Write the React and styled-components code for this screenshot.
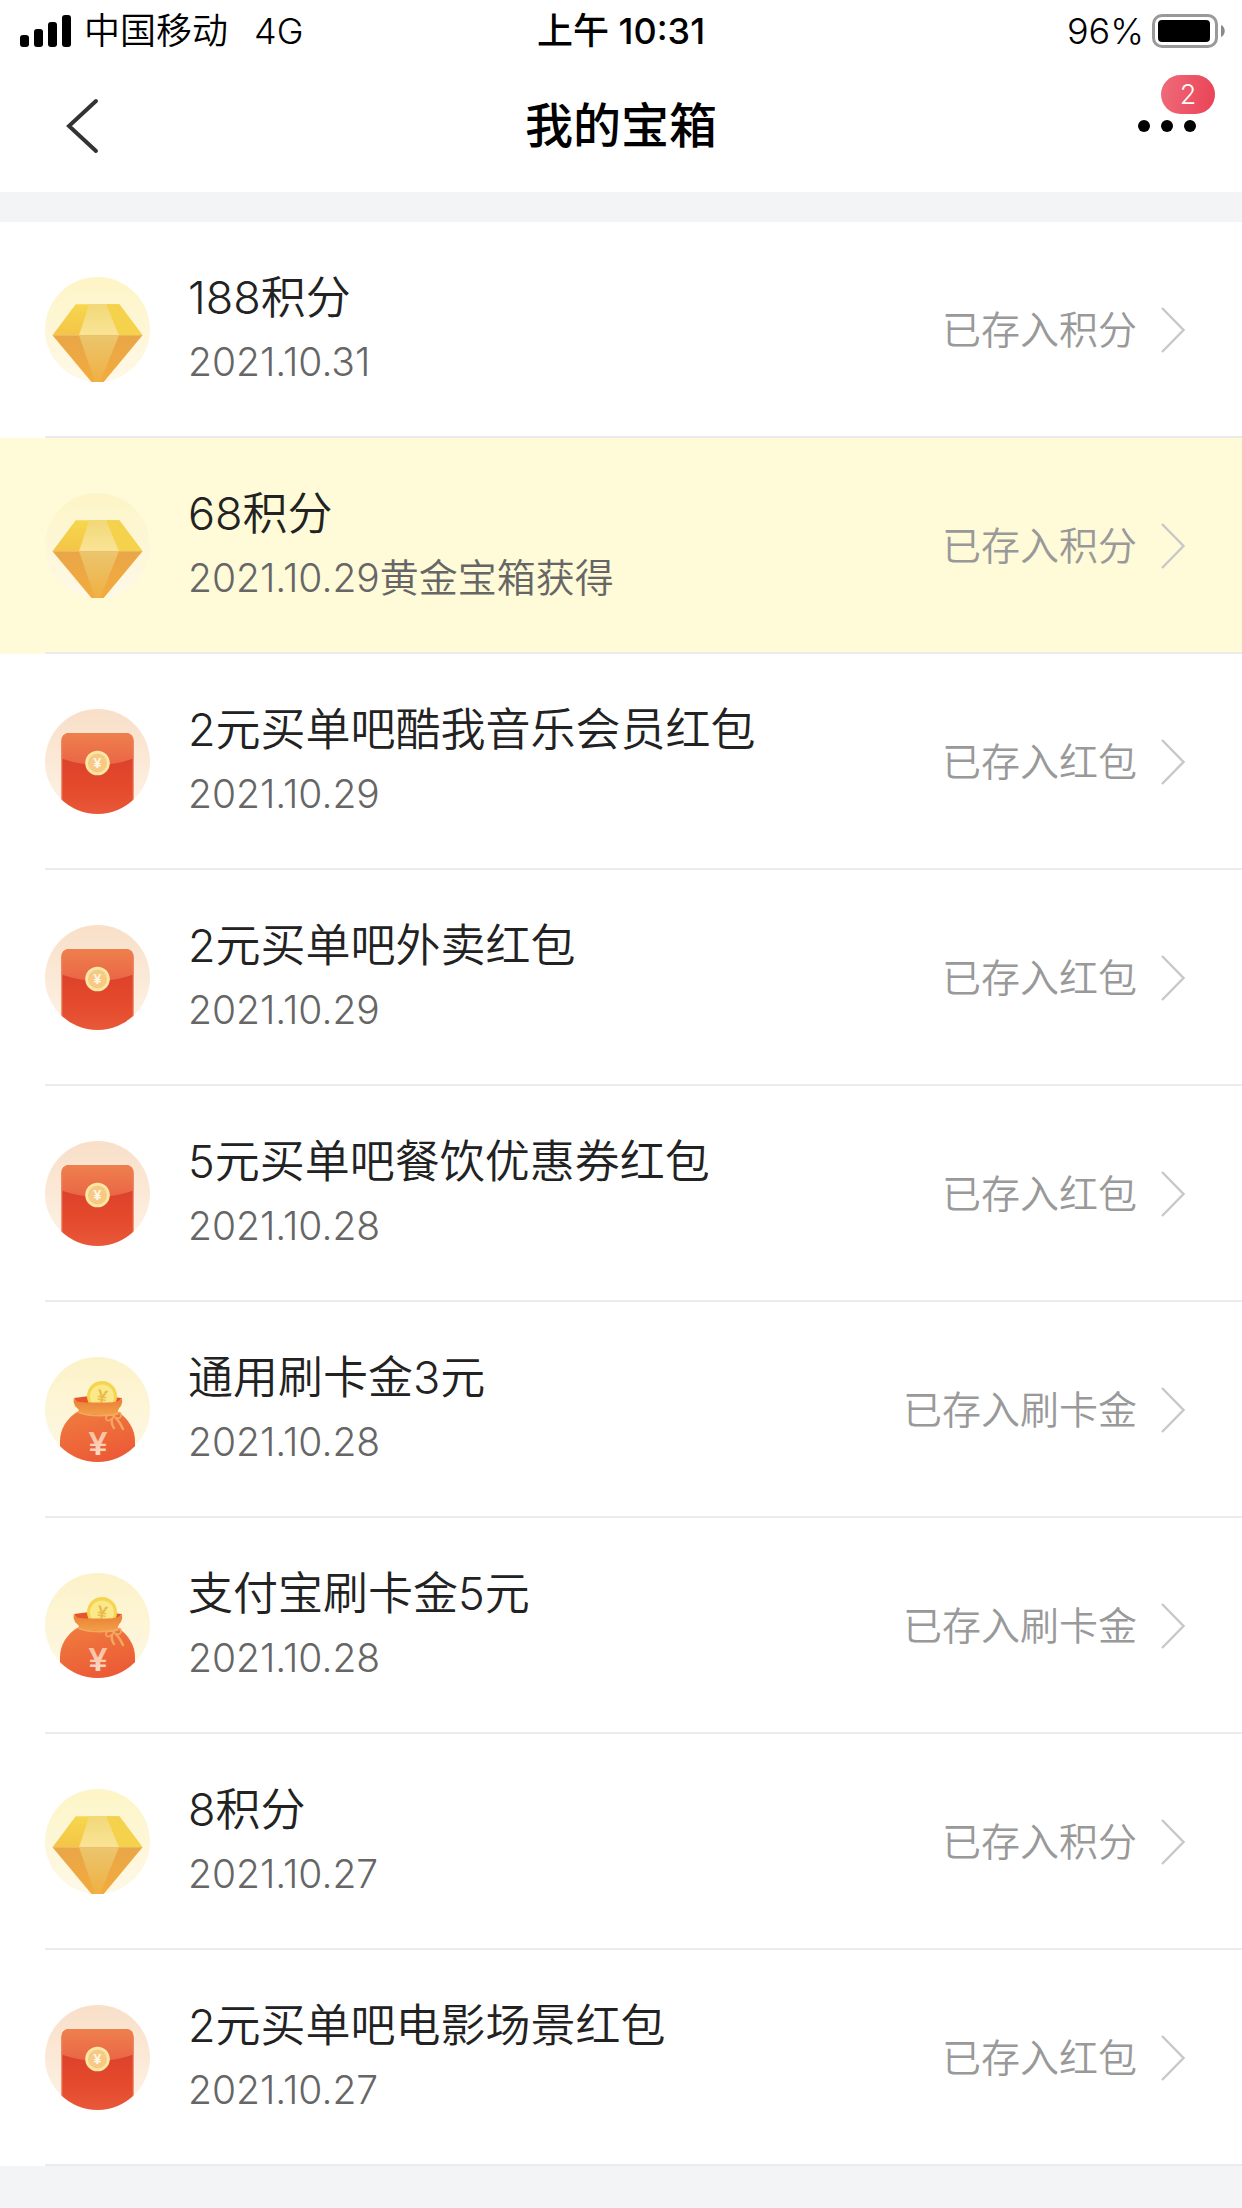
import React from 'react';

import styled, { createGlobalStyle } from 'styled-components'


const GlobalStyle = createGlobalStyle`
    * {
        box-sizing: border-box;
    }
    body {
        margin: 0;
        background-color: #f3f4f6;
        font-family: Inter, "Noto Sans CJK SC", sans-serif;
    }
`;

const PageView = styled.div`
    width: 100%;
    min-height: 100vh;
    background-color: #f3f4f6;
`;

const StatusBar = styled.div`
    width: 100%;
    height: 60px;
    padding: 2px 16px 0;
    display: grid;
    grid-template-columns: 1fr auto 1fr;
    align-items: center;
    background-color: white;
    color: black;
    font-size: 36px;
    font-weight: 350;
    line-height: 58px;
    svg {
        display: block;
    }
    .carrier {
        padding-left: 4px;
        display: flex;
        align-items: center;
        gap: 12px;
    }
    .network {
        padding-left: 14px;
    }
    .time {
        font-weight: 500;
    }
    .battery {
        display: flex;
        align-items: center;
        justify-content: flex-end;
        gap: 8px;
    }
`;

const HeaderView = styled.header`
    width: 100%;
    height: 132px;
    padding: 0 46px;
    display: grid;
    grid-template-columns: 1fr auto 1fr;
    align-items: center;
    background-color: white;
    h1 {
        margin: 0;
        color: black;
        font-size: 48px;
        font-weight: 500;
        line-height: 72px;
    }
`;

const IconButton = styled.button`
    position: relative;
    justify-self: ${props => props.$side};
    padding: 0;
    border: 0;
    background-color: transparent;
    cursor: pointer;
    svg {
        display: block;
    }
`;

const Badge = styled.span`
    position: absolute;
    right: -19px;
    bottom: 18px;
    width: 54px;
    height: 39px;
    border-radius: 20px;
    background: linear-gradient(100deg, #ef6c7b, #ea4255);
    color: white;
    font-family: Inter, sans-serif;
    font-size: 27px;
    font-weight: 350;
    line-height: 39px;
    text-align: center;
`;

const RewardList = styled.ul`
    margin: 30px 0 0;
    padding: 0;
    list-style: none;
`;

const RewardItem = styled.li`
    padding-left: 45px;
    background-color: ${props => props.$active ? '#fffad7' : 'white'};
`;

const RewardLink = styled.a`
    height: 216px;
    padding-top: 1px;
    padding-right: 57px;
    border-bottom: 2px solid #ebebee;
    display: flex;
    flex-direction: row;
    align-items: center;
    color: #222222;
    font-weight: 350;
    line-height: 64px;
    text-decoration: none;
    > svg {
        flex-shrink: 0;
        display: block;
    }
    .detail {
        flex: 1;
        padding-left: 38px;
    }
    .name {
        font-size: 45px;
    }
    .date {
        color: #666666;
        font-size: 39px;
    }
    .status {
        padding-right: 24px;
        color: #999999;
        font-size: 39px;
    }
`;


const SignalIcon = () => (
    <svg width="52" height="32" viewBox="0 0 52 32" aria-hidden="true">
        <rect x="0" y="20" width="9" height="12" rx="3" />
        <rect x="14" y="14" width="9" height="18" rx="3" />
        <rect x="28" y="7" width="9" height="25" rx="3" />
        <rect x="42" y="0" width="9" height="32" rx="3" />
    </svg>
)

const BatteryIcon = () => (
    <svg width="74" height="34" viewBox="0 0 74 34" aria-hidden="true">
        <rect x="1.5" y="1.5" width="63" height="31" rx="8.5" fill="none" stroke="#999999" strokeWidth="3" />
        <rect x="6" y="6" width="52" height="22" rx="4" />
        <path d="M69 11C74 13 74 21 69 23Z" fill="#8a8a8a" />
    </svg>
)

const BackIcon = () => (
    <svg width="58" height="60" viewBox="0 0 58 60" fill="none" stroke="#333333" strokeWidth="4" strokeLinecap="round" aria-hidden="true">
        <path d="M50 5L23 30L50 55" />
    </svg>
)

const MoreIcon = () => (
    <svg width="58" height="12" viewBox="0 0 58 12" aria-hidden="true">
        <circle cx="6" cy="6" r="6" />
        <circle cx="29" cy="6" r="6" />
        <circle cx="52" cy="6" r="6" />
    </svg>
)

const ArrowIcon = () => (
    <svg width="24" height="46" viewBox="0 0 24 46" fill="none" stroke="#c8c8c8" strokeWidth="2.4" aria-hidden="true">
        <path d="M1 1L22.5 23L1 45" />
    </svg>
)

const DiamondIcon = () => (
    <svg width="105" height="105" viewBox="0 0 105 105" aria-hidden="true">
        <defs>
            <linearGradient id="diamondBg" x1="0" y1="0" x2="0" y2="1">
                <stop offset="0" stopColor="#fdf5c6" />
                <stop offset="1" stopColor="#fef8e8" />
            </linearGradient>
            <linearGradient id="diamondTop" x1="0.6" y1="0" x2="0.4" y2="1">
                <stop offset="0" stopColor="#f6d84d" />
                <stop offset="1" stopColor="#f4c548" />
            </linearGradient>
            <linearGradient id="diamondTopMid" x1="0" y1="0" x2="0" y2="1">
                <stop offset="0" stopColor="#f2d878" />
                <stop offset="1" stopColor="#f9e496" />
            </linearGradient>
            <linearGradient id="diamondLow" x1="0" y1="0" x2="0" y2="1">
                <stop offset="0" stopColor="#e9a648" />
                <stop offset="1" stopColor="#f3ab3d" />
            </linearGradient>
            <linearGradient id="diamondLowMid" x1="0" y1="0" x2="0" y2="1">
                <stop offset="0" stopColor="#ebc56d" />
                <stop offset="1" stopColor="#f0b044" />
            </linearGradient>
        </defs>
        <circle cx="52.5" cy="52.5" r="52.5" fill="url(#diamondBg)" />
        <path d="M30.7 27.3H74.3L97.5 58.3H7.5Z" fill="url(#diamondTop)" />
        <path d="M61 27.3H74.3L97.5 58.3H74Z" fill="#f5d24c" />
        <path d="M44.3 27.3H61L74 58.3H34Z" fill="url(#diamondTopMid)" />
        <path d="M7.5 58.3H97.5L58.7 105H46.5Z" fill="url(#diamondLow)" />
        <path d="M34 58.3H74L55 105H50Z" fill="url(#diamondLowMid)" />
    </svg>
)

const PacketIcon = () => (
    <svg width="105" height="105" viewBox="0 0 105 105" aria-hidden="true">
        <defs>
            <linearGradient id="packetBg" x1="0" y1="0" x2="0" y2="1">
                <stop offset="0" stopColor="#f8dfc8" />
                <stop offset="1" stopColor="#fef3e7" />
            </linearGradient>
            <linearGradient id="packetBody" x1="0" y1="0" x2="0" y2="1">
                <stop offset="0.3" stopColor="#dd432b" />
                <stop offset="0.6" stopColor="#e4492b" />
                <stop offset="1" stopColor="#ea5e3e" />
            </linearGradient>
            <linearGradient id="packetFlap" x1="0" y1="0" x2="0" y2="1">
                <stop offset="0" stopColor="#ee804c" />
                <stop offset="1" stopColor="#ea6547" />
            </linearGradient>
            <clipPath id="packetClip">
                <circle cx="52.5" cy="52.5" r="52.5" />
            </clipPath>
        </defs>
        <circle cx="52.5" cy="52.5" r="52.5" fill="url(#packetBg)" />
        <g clipPath="url(#packetClip)">
            <rect x="16.5" y="24" width="72" height="90" rx="8" fill="url(#packetBody)" />
            <path d="M16.5 32Q16.5 24 24.5 24H80.5Q88.5 24 88.5 32V49.5Q52.5 62.5 16.5 49.5Z" fill="url(#packetFlap)" />
            <path d="M16.9 32V105M88.1 32V105" stroke="#ef8a6c" strokeWidth="0.8" />
        </g>
        <circle cx="52.5" cy="54" r="12.3" fill="#fbe8a4" />
        <circle cx="52.5" cy="54" r="9.5" fill="#f7ca84" />
        <text x="52.5" y="59" textAnchor="middle" fontFamily="Liberation Sans, sans-serif" fontSize="14" fontWeight="700" fill="#fff6e8">¥</text>
    </svg>
)

const BagIcon = () => (
    <svg width="105" height="105" viewBox="0 0 105 105" aria-hidden="true">
        <defs>
            <linearGradient id="bagBg" x1="0" y1="0" x2="0" y2="1">
                <stop offset="0" stopColor="#fcf2c8" />
                <stop offset="1" stopColor="#fef8e6" />
            </linearGradient>
            <linearGradient id="bagBody" x1="0.3" y1="0" x2="0.7" y2="1">
                <stop offset="0" stopColor="#ef7a3e" />
                <stop offset="1" stopColor="#ec5836" />
            </linearGradient>
            <linearGradient id="bagRim" x1="0" y1="0" x2="0" y2="1">
                <stop offset="0" stopColor="#ea7b38" />
                <stop offset="1" stopColor="#f2a046" />
            </linearGradient>
            <linearGradient id="bagSign" x1="0" y1="0" x2="0" y2="1">
                <stop offset="0" stopColor="#f8b795" />
                <stop offset="1" stopColor="#fbe0d0" />
            </linearGradient>
            <clipPath id="bagClip">
                <circle cx="52.5" cy="52.5" r="52.5" />
            </clipPath>
        </defs>
        <circle cx="52.5" cy="52.5" r="52.5" fill="url(#bagBg)" />
        <g clipPath="url(#bagClip)">
            <path d="M29 41Q52 37 76.5 41L70 50H35Z" fill="#e5542b" />
            <circle cx="57" cy="39" r="15" fill="#f5d44e" />
            <circle cx="57" cy="39.5" r="12" fill="#fbe888" />
            <text x="57" y="45.5" textAnchor="middle" fontFamily="Liberation Sans, sans-serif" fontSize="18" fontWeight="700" fill="#e9bb4c" transform="rotate(10 57 41)">¥</text>
            <path d="M34 54C21 61 15 73 15 84V105H90V84C90 73 84 62 72 54Z" fill="url(#bagBody)" />
            <path d="M28.7 41Q30 45.5 42 45.5H62Q75 45.5 76.7 40.5Q78 45 76 49Q72 53 72.5 57Q53 60 34.5 55Q34 52 30 49Q28 45 28.7 41Z" fill="url(#bagRim)" />
            <g fill="none" stroke="#f4a963" strokeWidth="1.6" strokeLinecap="round" strokeLinejoin="round">
                <path d="M34 55.5Q50 61 73 57" />
                <path d="M69 59.5C65 56 60 59 61 62C62 65 67 63 69 59.5C71 55 76 54 76 58C76 62 72 62 69 59.5" />
                <path d="M67 62Q66 67 69 71M71 61Q75 65 78 72" strokeWidth="2.4" />
            </g>
            <text x="53" y="98" textAnchor="middle" fontFamily="Liberation Sans, sans-serif" fontSize="34" fontWeight="700" fill="url(#bagSign)">¥</text>
        </g>
    </svg>
)

const icons = {
    points: DiamondIcon,
    packet: PacketIcon,
    cash: BagIcon,
}

const rewards = [
    { id: 1, type: 'points', name: '188积分', date: '2021.10.31', status: '已存入积分' },
    { id: 2, type: 'points', name: '68积分', date: '2021.10.29黄金宝箱获得', status: '已存入积分', active: true },
    { id: 3, type: 'packet', name: '2元买单吧酷我音乐会员红包', date: '2021.10.29', status: '已存入红包' },
    { id: 4, type: 'packet', name: '2元买单吧外卖红包', date: '2021.10.29', status: '已存入红包' },
    { id: 5, type: 'packet', name: '5元买单吧餐饮优惠券红包', date: '2021.10.28', status: '已存入红包' },
    { id: 6, type: 'cash', name: '通用刷卡金3元', date: '2021.10.28', status: '已存入刷卡金' },
    { id: 7, type: 'cash', name: '支付宝刷卡金5元', date: '2021.10.28', status: '已存入刷卡金' },
    { id: 8, type: 'points', name: '8积分', date: '2021.10.27', status: '已存入积分' },
    { id: 9, type: 'packet', name: '2元买单吧电影场景红包', date: '2021.10.27', status: '已存入红包' },
]

const Reward = (props) => {
    const { type, name, date, status, active } = props.reward
    const Icon = icons[type]

    return (
        <RewardItem $active={active}>
            <RewardLink href="#">
                <Icon />
                <div className="detail">
                    <div className="name">{name}</div>
                    <div className="date">{date}</div>
                </div>
                <span className="status">{status}</span>
                <ArrowIcon />
            </RewardLink>
        </RewardItem>
    )
}

const App = () => {
    return (
        <PageView lang="zh-CN">
            <GlobalStyle />
            <StatusBar>
                <div className="carrier">
                    <SignalIcon />
                    <span>中国移动</span>
                    <span className="network">4G</span>
                </div>
                <span className="time">上午 10:31</span>
                <div className="battery">
                    <span>96%</span>
                    <BatteryIcon />
                </div>
            </StatusBar>
            <HeaderView>
                <IconButton type="button" $side="start" aria-label="返回">
                    <BackIcon />
                </IconButton>
                <h1>我的宝箱</h1>
                <IconButton type="button" $side="end" aria-label="更多">
                    <MoreIcon />
                    <Badge>2</Badge>
                </IconButton>
            </HeaderView>
            <RewardList>
                {rewards.map(reward => (
                    <Reward key={reward.id} reward={reward} />
                ))}
            </RewardList>
        </PageView>
    )
}

export default App
